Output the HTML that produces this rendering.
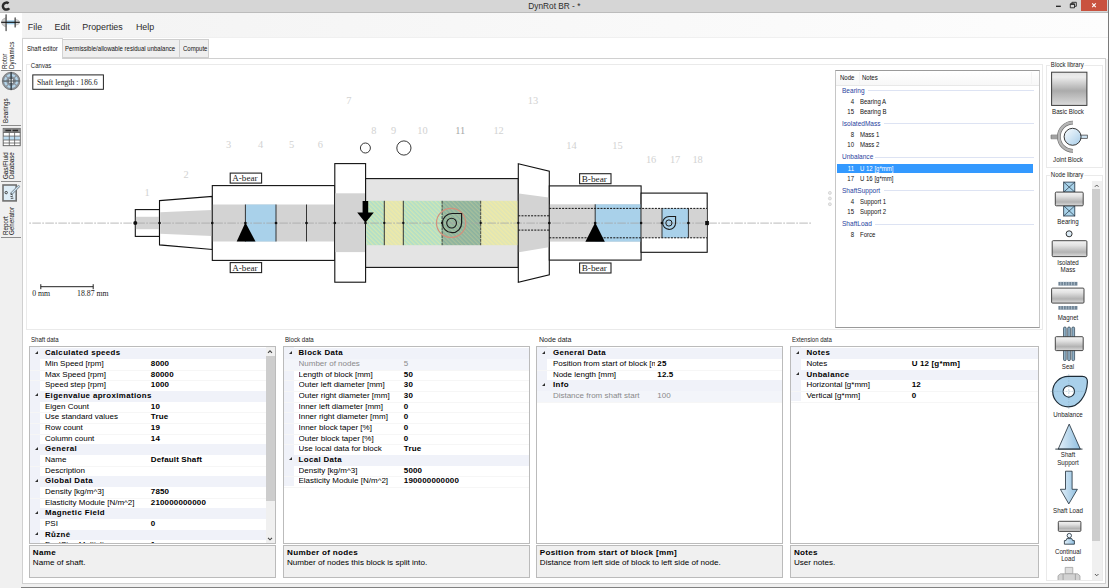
<!DOCTYPE html>
<html lang="en"><head><meta charset="utf-8"><title>DynRot BR - *</title>
<style>
html,body{margin:0;padding:0;}
body{width:1109px;height:588px;overflow:hidden;background:#f0f0f0;position:relative;font-family:"Liberation Sans",sans-serif;color:#111;}
.a{position:absolute;white-space:nowrap;}
.t{position:absolute;white-space:nowrap;line-height:1;}
.gb{position:absolute;border:1px solid #eaeaea;box-sizing:border-box;}
.gl{position:absolute;background:#fff;font-size:7px;line-height:8px;padding:0 1px;color:#222;white-space:nowrap;transform:scaleX(.86);transform-origin:0 0;}
.sx{transform:scaleX(.86);transform-origin:0 0;}
.pg{position:absolute;box-sizing:border-box;border:1px solid #bbbbbb;background:#fff;overflow:hidden;}
.row{position:absolute;left:0;right:0;height:10.65px;}
.cat{background:#f0f2f9;}
.row span{position:absolute;top:0;line-height:10.65px;font-size:8px;white-space:nowrap;color:#000;}
.row span.b{letter-spacing:0.15px;}
.b{font-weight:bold;}
.tri{position:absolute;left:5px;top:2.4px;width:0;height:0;border-left:3.4px solid transparent;border-bottom:3px solid #2e2e2e;}
.desc{position:absolute;box-sizing:border-box;border:1px solid #bbbbbb;background:#f0f0f0;}
.desc span{position:absolute;left:3px;font-size:8.1px;line-height:9px;white-space:nowrap;color:#000;}
.lv span{position:absolute;font-size:7px;line-height:9px;white-space:nowrap;transform:scaleX(.86);transform-origin:0 0;}
.lv span.n{transform-origin:100% 0;}
.lv span.g{font-size:7.2px;transform:scaleX(.91);color:#2a3f9e;}
.vt{position:absolute;white-space:nowrap;font-size:7.2px;line-height:7px;transform-origin:0 0;transform:rotate(-90deg) scaleX(.87);color:#111;}
.lib{position:absolute;font-size:7.1px;line-height:7.5px;text-align:center;width:56px;left:1040px;color:#222;transform:scaleX(.87);}
</style></head>
<body>
<div class="a" style="left:0;top:0;width:1109px;height:12.8px;background:#d6d6d6;border-bottom:0.8px solid #bcbcbc;box-sizing:border-box;"></div>
<svg class="a" style="left:0;top:0" width="12" height="12" viewBox="0 0 12 12"><path d="M8.6 3.4A3.5 3.5 0 1 0 9.2 8.2" fill="none" stroke="#2a2a2a" stroke-width="2.5"/></svg>
<div class="t" style="left:528.3px;top:2.4px;font-size:8.3px;color:#2c2c2c;">DynRot BR - *</div>
<div class="a" style="left:1081.3px;top:0;width:26px;height:10.5px;background:#c9523f;"></div>
<svg class="a" style="left:1040px;top:0" width="69" height="12" viewBox="0 0 69 12"><path d="M16 6.3h4.8" stroke="#222" stroke-width="1.3" fill="none"/><path d="M30.3 3.9h4.2v3.9h-4.2z M31.9 3.9v-1.6h4.4v4h-1.8" stroke="#222" stroke-width="0.9" fill="none"/><path d="M30.3 4.2h4.2" stroke="#222" stroke-width="1.2" fill="none"/><path d="M52.2 3.3l3.6 3.8M55.8 3.3l-3.6 3.8" stroke="#fff" stroke-width="1.1" fill="none"/></svg>
<div class="a" style="left:21px;top:12.8px;width:1087px;height:24.7px;background:linear-gradient(90deg,#f3f3f3,#fdfdfd);"></div>
<div class="a" style="left:21px;top:37.5px;width:1087px;height:21px;background:#fff;"></div>
<div class="t" style="left:27.8px;top:22.5px;font-size:8.9px;color:#2b2b2b;">File</div>
<div class="t" style="left:54.6px;top:22.5px;font-size:8.9px;color:#2b2b2b;">Edit</div>
<div class="t" style="left:82.3px;top:22.5px;font-size:8.9px;color:#2b2b2b;">Properties</div>
<div class="t" style="left:135.9px;top:22.5px;font-size:8.9px;color:#2b2b2b;">Help</div>
<div class="a" style="left:0;top:12.8px;width:21px;height:575.2px;background:#f0f0f0;"></div>
<div class="a" style="left:0;top:12.8px;width:22px;height:57.5px;background:#fff;"></div>
<div class="a" style="left:1px;top:70.0px;width:20px;height:1px;background:#8c8c8c;"></div>
<div class="a" style="left:1px;top:125.4px;width:20px;height:1px;background:#8c8c8c;"></div>
<div class="a" style="left:1px;top:180.8px;width:20px;height:1px;background:#8c8c8c;"></div>
<div class="a" style="left:1px;top:236.8px;width:20px;height:1px;background:#8c8c8c;"></div>
<div class="vt" style="left:0.9000000000000004px;top:69px;">Rotor</div>
<div class="vt" style="left:7.9px;top:69px;">Dynamics</div>
<div class="vt" style="left:1.7000000000000002px;top:123.3px;">Bearings</div>
<div class="vt" style="left:1.9000000000000004px;top:179px;">Gas/Fluid</div>
<div class="vt" style="left:8.4px;top:179px;">Database</div>
<div class="vt" style="left:1.9000000000000004px;top:234.5px;">Report</div>
<div class="vt" style="left:8.4px;top:234.5px;">Generator</div>
<svg class="a" style="left:0;top:12px" width="22" height="195" viewBox="0 12 22 195">
<!-- rotor -->
<path d="M6 17.6Q1.4 19 1.4 22.3Q1.4 25.6 6 27Z" fill="#cdcdcd" stroke="#9a9a9a" stroke-width="0.5"/>
<path d="M15.2 19.2Q19.7 20 19.7 22.3Q19.7 24.6 15.2 25.4Z" fill="#dadada" stroke="#9a9a9a" stroke-width="0.5"/>
<rect x="6.4" y="20.4" width="8.6" height="3.9" fill="#9ccbe8"/>
<rect x="5.4" y="14.2" width="1.4" height="17" rx="0.6" fill="#5a5a5a"/>
<rect x="14.5" y="17.3" width="1.3" height="10.2" rx="0.6" fill="#4a4a4a"/>
<path d="M1.2 22.3H19.7" stroke="#111" stroke-width="1.1"/>
<!-- bearings -->
<circle cx="11.1" cy="81" r="8.8" fill="#8d959d" stroke="#666" stroke-width="0.7"/>
<circle cx="11.1" cy="81" r="5.9" fill="none" stroke="#b4d6ec" stroke-width="2.2" stroke-dasharray="3.4 1.2"/>
<circle cx="11.1" cy="81" r="3.6" fill="#7d858d"/>
<rect x="9.3" y="79" width="3.6" height="4" fill="#f4f4f4"/>
<path d="M11.1 72v18" stroke="#1d2a33" stroke-width="1.1"/>
<path d="M2.4 81h17.4" stroke="#4a5258" stroke-width="0.9"/>
<!-- table -->
<rect x="3.2" y="128.4" width="17" height="17.3" fill="#fff" stroke="#5a5a5a" stroke-width="0.9"/>
<rect x="3.2" y="128.4" width="17" height="4" fill="#8a8a8a"/>
<path d="M5.4 130.5h5.6M12.6 130.5h5.4" stroke="#2a2a2a" stroke-width="1.5"/>
<rect x="3.7" y="136.2" width="16" height="3.8" fill="#bddcf0"/>
<path d="M3.2 132.5h17M3.2 136.1h17M3.2 140h17M3.2 143h17M9.3 132.4v13.3M14.6 132.4v13.3" stroke="#5a5a5a" stroke-width="0.8" fill="none"/>
<!-- report -->
<rect x="3" y="185" width="13.2" height="15.9" fill="#deedf7" stroke="#707070" stroke-width="1.6"/>
<path d="M19.4 185.6l-8.2 8.2" stroke="#6d7880" stroke-width="2.6"/>
<path d="M19.4 185.6l-7.6 7.6" stroke="#cfe5f3" stroke-width="1.3"/>
<circle cx="6.2" cy="192.6" r="1.2" fill="none" stroke="#333" stroke-width="0.9"/>
<path d="M10.2 193.8l2.6 1.4M10.4 196.4l2.4.3M10.8 198.4l2.6-.2" stroke="#444" stroke-width="0.9"/>
</svg>
<div class="a" style="left:21.6px;top:58px;width:1084.8px;height:526.4px;box-sizing:border-box;background:#fff;border:1px solid #d0d0d0;"></div>
<div class="a" style="left:62px;top:38.7px;width:118px;height:19.8px;box-sizing:border-box;background:#efefef;border:1px solid #cfcfcf;"></div>
<div class="a" style="left:179.3px;top:38.7px;width:30.2px;height:19.8px;box-sizing:border-box;background:#efefef;border:1px solid #cfcfcf;"></div>
<div class="a" style="left:22px;top:37.7px;width:40.5px;height:21.6px;box-sizing:border-box;background:#fff;border:1px solid #d2d2d2;border-bottom:none;"></div>
<div class="t sx" style="left:26.8px;top:45.4px;font-size:7px;color:#111;">Shaft editor</div>
<div class="t sx" style="left:65.2px;top:45.4px;font-size:7px;color:#111;">Permissible/allowable residual unbalance</div>
<div class="t sx" style="left:183px;top:45.4px;font-size:7px;color:#111;">Compute</div>
<div class="gb" style="left:26px;top:64.4px;width:1016.8px;height:265.3px;"></div>
<div class="gl" style="left:29.8px;top:61.5px;">Canvas</div>
<svg class="a" style="left:0;top:0" width="1109" height="588" viewBox="0 0 1109 588">
<defs>
<pattern id="hg" width="3" height="3" patternUnits="userSpaceOnUse" patternTransform="rotate(-45)"><rect width="3" height="3" fill="#aedecb"/><rect width="1.4" height="3" fill="#d2e7b2"/></pattern>
<pattern id="hy" width="3" height="3" patternUnits="userSpaceOnUse" patternTransform="rotate(-45)"><rect width="3" height="3" fill="#eeeaa8"/><rect width="1.4" height="3" fill="#dde4b8"/></pattern>
<pattern id="hd" width="3" height="3" patternUnits="userSpaceOnUse" patternTransform="rotate(-45)"><rect width="3" height="3" fill="#8ab2a0"/><rect width="1.4" height="3" fill="#a8c09c"/></pattern>
</defs>
<rect x="32.8" y="74.9" width="70.6" height="14.4" fill="#fff" stroke="#222" stroke-width="1"/>
<text x="37" y="84.6" font-family="Liberation Serif,serif" font-size="7.7" fill="#222">Shaft length : 186.6</text>
<rect x="135.3" y="209.6" width="24.2" height="26.8" fill="#fff" stroke="#111" stroke-width="1.1"/>
<rect x="135.9" y="216.8" width="23" height="12.4" fill="#d3d3d3"/>
<polygon points="159.5,200.6 212.3,196.4 212.3,249.5 159.5,244.9" fill="#fff" stroke="#111" stroke-width="1.1"/>
<polygon points="160.1,212.2 211.7,210 211.7,236 160.1,233.8" fill="#d3d3d3"/>
<rect x="212.3" y="185.6" width="122.5" height="74.8" fill="#fff" stroke="#111" stroke-width="1.1"/>
<rect x="212.9" y="204.5" width="121.3" height="37" fill="#d3d3d3"/>
<rect x="245.4" y="204.5" width="30.6" height="37" fill="#a9d1ea"/>
<rect x="334.8" y="163.6" width="30.8" height="118.6" fill="#fff" stroke="#111" stroke-width="1.1"/>
<rect x="335.4" y="193.3" width="29.6" height="58.8" fill="#d3d3d3"/>
<rect x="365.6" y="178.6" width="152.7" height="88.8" fill="#e4e4e4" stroke="#111" stroke-width="1.1"/>
<rect x="366.2" y="200.8" width="18.1" height="44.4" fill="url(#hg)"/>
<rect x="384.3" y="200.8" width="19" height="44.4" fill="url(#hy)"/>
<rect x="403.3" y="200.8" width="38.8" height="44.4" fill="url(#hg)"/>
<rect x="442.1" y="200.8" width="38.6" height="44.4" fill="url(#hd)"/>
<rect x="480.7" y="200.8" width="37" height="44.4" fill="url(#hy)"/>
<polygon points="518.3,163.7 549.3,171.1 549.3,274.8 518.3,282.4" fill="#fff" stroke="#111" stroke-width="1.1"/>
<polygon points="518.9,193.6 548.7,197.4 548.7,247.2 518.9,252.3" fill="#d3d3d3"/>
<rect x="549.3" y="185.9" width="91.8" height="74.2" fill="#fff" stroke="#111" stroke-width="1.1"/>
<rect x="549.9" y="204.3" width="90.6" height="37.3" fill="#d3d3d3"/>
<rect x="595.2" y="204.3" width="45.6" height="37.3" fill="#a9d1ea"/>
<rect x="641.1" y="193.1" width="66.1" height="59.2" fill="#fff" stroke="#111" stroke-width="1.1"/>
<rect x="641.7" y="208.4" width="64.9" height="29.4" fill="#d3d3d3"/>
<rect x="662" y="208.4" width="26.4" height="29.4" fill="#a9d1ea"/>
<path d="M518.3 215.8H549.3M518.3 230.1H549.3" stroke="#111" stroke-width="1" stroke-dasharray="2 1.2" fill="none"/>
<path d="M549.3 208.4H707M549.3 237.8H707" stroke="#111" stroke-width="1" stroke-dasharray="2 1.2" fill="none"/>
<path d="M245.4 204.5V241.5M276 204.5V241.5M306.5 204.5V241.5" stroke="#222" stroke-width="0.9" fill="none"/>
<path d="M384.3 200.8V245.2M403.3 200.8V245.2" stroke="#222" stroke-width="0.9" fill="none"/>
<path d="M442.1 200.8V245.2M480.7 200.8V245.2" stroke="#222" stroke-width="0.8" stroke-dasharray="3 0.8" fill="none"/>
<path d="M595.2 204.3V223M662 208.4V237.8M688.4 208.4V237.8" stroke="#222" stroke-width="0.9" fill="none"/>
<path d="M29.2 223.1H812.2" stroke="#a4a4a4" stroke-width="0.75" stroke-dasharray="1.8 1.3 8.6 1.3" fill="none"/>
<circle cx="135.3" cy="223" r="2" fill="#111"/>
<circle cx="159.5" cy="223" r="1.35" fill="#111"/>
<circle cx="212.3" cy="223" r="1.35" fill="#111"/>
<circle cx="245.4" cy="223" r="1.35" fill="#111"/>
<circle cx="276" cy="223" r="1.35" fill="#111"/>
<circle cx="306.5" cy="223" r="1.35" fill="#111"/>
<circle cx="334.8" cy="223" r="1.35" fill="#111"/>
<circle cx="365.5" cy="223" r="1.35" fill="#111"/>
<circle cx="384.3" cy="223" r="1.15" fill="#111"/>
<circle cx="403.3" cy="223" r="1.15" fill="#111"/>
<circle cx="442.1" cy="223" r="1.15" fill="#111"/>
<circle cx="480.7" cy="223" r="1.15" fill="#111"/>
<circle cx="518.3" cy="223" r="1.15" fill="#111"/>
<circle cx="549.3" cy="223" r="1.35" fill="#111"/>
<circle cx="595.2" cy="223" r="1.35" fill="#111"/>
<circle cx="641.1" cy="223" r="1.35" fill="#111"/>
<circle cx="662" cy="223" r="1.35" fill="#111"/>
<circle cx="688.4" cy="223" r="1.35" fill="#111"/>
<rect x="705.2" y="221" width="3.7" height="4.1" fill="#111"/>
<polygon points="245.4,222.5 236.7,241.6 255.5,241.6" fill="#000"/>
<polygon points="595.2,222.5 585.4,241.7 604.8,241.7" fill="#000"/>
<polygon points="362.6,201 368.2,201 368.2,212.4 373.8,212.4 365.4,222.8 357.2,212.4 362.6,212.4" fill="#000"/>
<circle cx="365.4" cy="148" r="5" fill="#fff" stroke="#222" stroke-width="0.9"/>
<circle cx="403.9" cy="148" r="7.1" fill="#fff" stroke="#222" stroke-width="0.9"/>
<circle cx="451.1" cy="222.9" r="14.6" fill="none" stroke="#d2907c" stroke-width="1.2"/>
<path d="M452 213.5H461.6V223A9.6 9.6 0 1 1 452 213.5Z" fill="none" stroke="#1a1a1a" stroke-width="1.2"/>
<circle cx="451.6" cy="223.1" r="4.9" fill="none" stroke="#1a1a1a" stroke-width="1.1"/>
<path d="M669.1 216.4H675.6V223A6.5 6.5 0 1 1 669.1 216.4Z" fill="none" stroke="#1a1a1a" stroke-width="1.05"/>
<circle cx="668.9" cy="223" r="3.1" fill="none" stroke="#1a1a1a" stroke-width="1"/>
<rect x="230.2" y="173.1" width="31.4" height="10" fill="#fff" stroke="#222" stroke-width="1.1"/>
<text x="232.29999999999998" y="181.1" font-family="Liberation Serif,serif" font-size="9.2" textLength="25.2" lengthAdjust="spacingAndGlyphs" fill="#222">A-bear</text>
<rect x="230.2" y="262.6" width="31.4" height="10" fill="#fff" stroke="#222" stroke-width="1.1"/>
<text x="232.29999999999998" y="270.6" font-family="Liberation Serif,serif" font-size="9.2" textLength="25.2" lengthAdjust="spacingAndGlyphs" fill="#222">A-bear</text>
<rect x="579.6" y="173.7" width="31.4" height="10" fill="#fff" stroke="#222" stroke-width="1.1"/>
<text x="581.7" y="181.7" font-family="Liberation Serif,serif" font-size="9.2" textLength="25.2" lengthAdjust="spacingAndGlyphs" fill="#222">B-bear</text>
<rect x="579.6" y="263" width="31.4" height="10" fill="#fff" stroke="#222" stroke-width="1.1"/>
<text x="581.7" y="271" font-family="Liberation Serif,serif" font-size="9.2" textLength="25.2" lengthAdjust="spacingAndGlyphs" fill="#222">B-bear</text>
<text x="147.2" y="196.3" text-anchor="middle" font-family="Liberation Serif,serif" font-size="10.4" fill="#d2d2d2">1</text>
<text x="186" y="177.8" text-anchor="middle" font-family="Liberation Serif,serif" font-size="10.4" fill="#d2d2d2">2</text>
<text x="228.7" y="148.4" text-anchor="middle" font-family="Liberation Serif,serif" font-size="10.4" fill="#d2d2d2">3</text>
<text x="260.5" y="148.4" text-anchor="middle" font-family="Liberation Serif,serif" font-size="10.4" fill="#d2d2d2">4</text>
<text x="291.5" y="148.4" text-anchor="middle" font-family="Liberation Serif,serif" font-size="10.4" fill="#d2d2d2">5</text>
<text x="320.3" y="148.4" text-anchor="middle" font-family="Liberation Serif,serif" font-size="10.4" fill="#d2d2d2">6</text>
<text x="348.8" y="103.9" text-anchor="middle" font-family="Liberation Serif,serif" font-size="10.4" fill="#d2d2d2">7</text>
<text x="373.8" y="133.8" text-anchor="middle" font-family="Liberation Serif,serif" font-size="10.4" fill="#d2d2d2">8</text>
<text x="393.5" y="133.8" text-anchor="middle" font-family="Liberation Serif,serif" font-size="10.4" fill="#d2d2d2">9</text>
<text x="422.4" y="133.8" text-anchor="middle" font-family="Liberation Serif,serif" font-size="10.4" fill="#d2d2d2">10</text>
<text x="460.2" y="133.8" text-anchor="middle" font-family="Liberation Serif,serif" font-size="10.4" fill="#a6a6a6">11</text>
<text x="498.6" y="133.8" text-anchor="middle" font-family="Liberation Serif,serif" font-size="10.4" fill="#d2d2d2">12</text>
<text x="533" y="103.9" text-anchor="middle" font-family="Liberation Serif,serif" font-size="10.4" fill="#d2d2d2">13</text>
<text x="571.4" y="148.5" text-anchor="middle" font-family="Liberation Serif,serif" font-size="10.4" fill="#d2d2d2">14</text>
<text x="617.4" y="148.5" text-anchor="middle" font-family="Liberation Serif,serif" font-size="10.4" fill="#d2d2d2">15</text>
<text x="651.1" y="162.8" text-anchor="middle" font-family="Liberation Serif,serif" font-size="10.4" fill="#d2d2d2">16</text>
<text x="675.1" y="162.8" text-anchor="middle" font-family="Liberation Serif,serif" font-size="10.4" fill="#d2d2d2">17</text>
<text x="697.6" y="162.8" text-anchor="middle" font-family="Liberation Serif,serif" font-size="10.4" fill="#d2d2d2">18</text>
<path d="M40.8 286.7H93.2M40.8 284.2V289.2M93.2 284.2V289.2" stroke="#222" stroke-width="1" fill="none"/>
<text x="32.2" y="296.4" font-family="Liberation Serif,serif" font-size="7.8" fill="#222">0 mm</text>
<text x="77" y="296.4" font-family="Liberation Serif,serif" font-size="7.8" fill="#222">18.87 mm</text>
<circle cx="829.9" cy="192.9" r="1.5" fill="#e9e9e9" stroke="#c6c6c6" stroke-width="0.6"/>
<circle cx="829.9" cy="198.5" r="1.5" fill="#e9e9e9" stroke="#c6c6c6" stroke-width="0.6"/>
<circle cx="829.9" cy="204.2" r="1.5" fill="#e9e9e9" stroke="#c6c6c6" stroke-width="0.6"/>
</svg>
<div class="a lv" style="left:834.6px;top:70px;width:205.6px;height:257.9px;box-sizing:border-box;border:1px solid #c6c6c6;border-top-color:#9a9a9a;border-bottom-color:#9a9a9a;background:#fff;">
<div class="a" style="left:0;top:0;width:203.5px;height:13.6px;background:linear-gradient(#ffffff,#f7f7f7);border-bottom:1px solid #e8e8e8;"></div>
<div class="a" style="left:23.4px;top:1px;width:1px;height:12px;background:#f3f3f3;"></div>
<div class="a" style="left:195px;top:1px;width:1px;height:12px;background:#f3f3f3;"></div>
<span style="left:4.8px;top:2px;">Node</span><span style="left:26.2px;top:2px;">Notes</span>
<span class="g" style="left:6.9px;top:14.50px;">Bearing</span>
<div class="a" style="left:32.9px;top:18.80px;width:165.6px;height:1px;background:#dde3f3;"></div>
<span class="n" style="left:2.4px;width:16px;text-align:right;top:25.60px;color:#111;">4</span><span style="left:24.3px;top:25.60px;color:#111;">Bearing A</span>
<span class="n" style="left:2.4px;width:16px;text-align:right;top:35.80px;color:#111;">15</span><span style="left:24.3px;top:35.80px;color:#111;">Bearing B</span>
<span class="g" style="left:6.9px;top:47.95px;">IsolatedMass</span>
<div class="a" style="left:48.9px;top:52.25px;width:149.6px;height:1px;background:#dde3f3;"></div>
<span class="n" style="left:2.4px;width:16px;text-align:right;top:59.05px;color:#111;">8</span><span style="left:24.3px;top:59.05px;color:#111;">Mass 1</span>
<span class="n" style="left:2.4px;width:16px;text-align:right;top:69.25px;color:#111;">10</span><span style="left:24.3px;top:69.25px;color:#111;">Mass 2</span>
<span class="g" style="left:6.9px;top:81.40px;">Unbalance</span>
<div class="a" style="left:39.9px;top:85.70px;width:158.6px;height:1px;background:#dde3f3;"></div>
<div class="a" style="left:1px;top:92.50px;width:196.5px;height:9.4px;background:#3399ff;"></div>
<span class="n" style="left:2.4px;width:16px;text-align:right;top:92.50px;color:#fff;">11</span><span style="left:24.3px;top:92.50px;color:#fff;">U 12 [g*mm]</span>
<span class="n" style="left:2.4px;width:16px;text-align:right;top:102.70px;color:#111;">17</span><span style="left:24.3px;top:102.70px;color:#111;">U 16 [g*mm]</span>
<span class="g" style="left:6.9px;top:114.85px;">ShaftSupport</span>
<div class="a" style="left:48.9px;top:119.15px;width:149.6px;height:1px;background:#dde3f3;"></div>
<span class="n" style="left:2.4px;width:16px;text-align:right;top:125.95px;color:#111;">4</span><span style="left:24.3px;top:125.95px;color:#111;">Support 1</span>
<span class="n" style="left:2.4px;width:16px;text-align:right;top:136.15px;color:#111;">15</span><span style="left:24.3px;top:136.15px;color:#111;">Support 2</span>
<span class="g" style="left:6.9px;top:148.30px;">ShaftLoad</span>
<div class="a" style="left:39.9px;top:152.60px;width:158.6px;height:1px;background:#dde3f3;"></div>
<span class="n" style="left:2.4px;width:16px;text-align:right;top:159.40px;color:#111;">8</span><span style="left:24.3px;top:159.40px;color:#111;">Force</span>
</div>
<div class="t" style="left:31.3px;top:336.6px;font-size:6.9px;color:#222;transform:scaleX(0.88);transform-origin:0 0;">Shaft data</div>
<div class="pg" style="left:28.8px;top:345.9px;width:247.3px;height:197.8px;">
<div class="a" style="left:0;top:0;width:10px;height:198.03px;background:#f0f2f9;"></div>
<div class="row cat" style="top:1.60px;"><i class="tri"></i><span class="b" style="left:15.2px;font-size:7.9px;letter-spacing:0.37px;">Calculated speeds</span></div>
<div class="row" style="top:12.25px;border-bottom:0.5px solid #f6f6f6;"><span style="left:15.2px;width:103.5px;overflow:hidden;">Min Speed [rpm]</span><span class="b" style="left:121.0px;">8000</span></div>
<div class="row" style="top:22.90px;border-bottom:0.5px solid #f6f6f6;"><span style="left:15.2px;width:103.5px;overflow:hidden;">Max Speed [rpm]</span><span class="b" style="left:121.0px;">80000</span></div>
<div class="row" style="top:33.55px;border-bottom:0.5px solid #f6f6f6;"><span style="left:15.2px;width:103.5px;overflow:hidden;">Speed step [rpm]</span><span class="b" style="left:121.0px;">1000</span></div>
<div class="row cat" style="top:44.20px;"><i class="tri"></i><span class="b" style="left:15.2px;font-size:7.9px;letter-spacing:0.37px;">Eigenvalue aproximations</span></div>
<div class="row" style="top:54.85px;border-bottom:0.5px solid #f6f6f6;"><span style="left:15.2px;width:103.5px;overflow:hidden;">Eigen Count</span><span class="b" style="left:121.0px;">10</span></div>
<div class="row" style="top:65.50px;border-bottom:0.5px solid #f6f6f6;"><span style="left:15.2px;width:103.5px;overflow:hidden;">Use standard values</span><span class="b" style="left:121.0px;">True</span></div>
<div class="row" style="top:76.15px;border-bottom:0.5px solid #f6f6f6;"><span style="left:15.2px;width:103.5px;overflow:hidden;">Row count</span><span class="b" style="left:121.0px;">19</span></div>
<div class="row" style="top:86.80px;border-bottom:0.5px solid #f6f6f6;"><span style="left:15.2px;width:103.5px;overflow:hidden;">Column count</span><span class="b" style="left:121.0px;">14</span></div>
<div class="row cat" style="top:97.45px;"><i class="tri"></i><span class="b" style="left:15.2px;font-size:7.9px;letter-spacing:0.37px;">General</span></div>
<div class="row" style="top:108.10px;border-bottom:0.5px solid #f6f6f6;"><span style="left:15.2px;width:103.5px;overflow:hidden;">Name</span><span class="b" style="left:121.0px;">Default Shaft</span></div>
<div class="row" style="top:118.75px;border-bottom:0.5px solid #f6f6f6;"><span style="left:15.2px;width:103.5px;overflow:hidden;">Description</span><span class="b" style="left:121.0px;"></span></div>
<div class="row cat" style="top:129.40px;"><i class="tri"></i><span class="b" style="left:15.2px;font-size:7.9px;letter-spacing:0.37px;">Global Data</span></div>
<div class="row" style="top:140.05px;border-bottom:0.5px solid #f6f6f6;"><span style="left:15.2px;width:103.5px;overflow:hidden;">Density [kg/m^3]</span><span class="b" style="left:121.0px;">7850</span></div>
<div class="row" style="top:150.70px;border-bottom:0.5px solid #f6f6f6;"><span style="left:15.2px;width:103.5px;overflow:hidden;">Elasticity Module [N/m^2]</span><span class="b" style="left:121.0px;">210000000000</span></div>
<div class="row cat" style="top:161.35px;"><i class="tri"></i><span class="b" style="left:15.2px;font-size:7.9px;letter-spacing:0.37px;">Magnetic Field</span></div>
<div class="row" style="top:172.00px;border-bottom:0.5px solid #f6f6f6;"><span style="left:15.2px;width:103.5px;overflow:hidden;">PSI</span><span class="b" style="left:121.0px;">0</span></div>
<div class="row cat" style="top:182.65px;"><i class="tri"></i><span class="b" style="left:15.2px;font-size:7.9px;letter-spacing:0.37px;">R&#367;zn&#233;</span></div>
<div class="row" style="top:193.30px;border-bottom:0.5px solid #f6f6f6;"><span style="left:15.2px;width:103.5px;overflow:hidden;">FontSize Multiplier</span><span class="b" style="left:121.0px;">1</span></div>
<div class="a" style="right:0;top:0;width:9.2px;height:196px;background:#f0f0f0;"></div>
<div class="a" style="right:0;top:9.4px;width:9.2px;height:145px;background:#cdcdcd;"></div>
<svg class="a" style="right:-0.2px;top:0" width="10" height="196" viewBox="0 0 10 196"><path d="M3 5.8L5 3.8L7 5.8M3 190.8L5 192.8L7 190.8" stroke="#444" stroke-width="1.1" fill="none"/></svg>
</div>
<div class="desc" style="left:28.8px;top:544.9px;width:247.3px;height:33.5px;"><span class="b" style="top:2.5px;letter-spacing:0.3px;">Name</span><span style="top:12.1px;">Name of shaft.</span></div>
<div class="t" style="left:284.9px;top:336.6px;font-size:6.9px;color:#222;transform:scaleX(0.894);transform-origin:0 0;">Block data</div>
<div class="pg" style="left:283.0px;top:345.9px;width:246.9px;height:197.8px;">
<div class="a" style="left:0;top:0;width:10px;height:139.45px;background:#f0f2f9;"></div>
<div class="row cat" style="top:1.60px;"><i class="tri"></i><span class="b" style="left:14.5px;font-size:7.9px;letter-spacing:0.37px;">Block Data</span></div>
<div class="row" style="top:12.25px;border-bottom:0.5px solid #f6f6f6;background:#f3f5fa;"><span style="color:#8a8a8a;left:14.5px;width:103.0px;overflow:hidden;">Number of nodes</span><span style="color:#8a8a8a;left:119.8px;">5</span></div>
<div class="row" style="top:22.90px;border-bottom:0.5px solid #f6f6f6;"><span style="left:14.5px;width:103.0px;overflow:hidden;">Length of block [mm]</span><span class="b" style="left:119.8px;">50</span></div>
<div class="row" style="top:33.55px;border-bottom:0.5px solid #f6f6f6;"><span style="left:14.5px;width:103.0px;overflow:hidden;">Outer left diameter [mm]</span><span class="b" style="left:119.8px;">30</span></div>
<div class="row" style="top:44.20px;border-bottom:0.5px solid #f6f6f6;"><span style="left:14.5px;width:103.0px;overflow:hidden;">Outer right diameter [mm]</span><span class="b" style="left:119.8px;">30</span></div>
<div class="row" style="top:54.85px;border-bottom:0.5px solid #f6f6f6;"><span style="left:14.5px;width:103.0px;overflow:hidden;">Inner left diameter [mm]</span><span class="b" style="left:119.8px;">0</span></div>
<div class="row" style="top:65.50px;border-bottom:0.5px solid #f6f6f6;"><span style="left:14.5px;width:103.0px;overflow:hidden;">Inner right diameter [mm]</span><span class="b" style="left:119.8px;">0</span></div>
<div class="row" style="top:76.15px;border-bottom:0.5px solid #f6f6f6;"><span style="left:14.5px;width:103.0px;overflow:hidden;">Inner block taper [%]</span><span class="b" style="left:119.8px;">0</span></div>
<div class="row" style="top:86.80px;border-bottom:0.5px solid #f6f6f6;"><span style="left:14.5px;width:103.0px;overflow:hidden;">Outer block taper [%]</span><span class="b" style="left:119.8px;">0</span></div>
<div class="row" style="top:97.45px;border-bottom:0.5px solid #f6f6f6;"><span style="left:14.5px;width:103.0px;overflow:hidden;">Use local data for block</span><span class="b" style="left:119.8px;">True</span></div>
<div class="row cat" style="top:108.10px;"><i class="tri"></i><span class="b" style="left:14.5px;font-size:7.9px;letter-spacing:0.37px;">Local Data</span></div>
<div class="row" style="top:118.75px;border-bottom:0.5px solid #f6f6f6;"><span style="left:14.5px;width:103.0px;overflow:hidden;">Density [kg/m^3]</span><span class="b" style="left:119.8px;">5000</span></div>
<div class="row" style="top:129.40px;border-bottom:0.5px solid #f6f6f6;"><span style="left:14.5px;width:103.0px;overflow:hidden;">Elasticity Module [N/m^2]</span><span class="b" style="left:119.8px;">190000000000</span></div>
</div>
<div class="desc" style="left:283.0px;top:544.9px;width:246.9px;height:33.5px;"><span class="b" style="top:2.5px;letter-spacing:0.3px;">Number of nodes</span><span style="top:12.1px;">Number of nodes this block is split into.</span></div>
<div class="t" style="left:538.5px;top:336.6px;font-size:6.9px;color:#222;transform:scaleX(1.02);transform-origin:0 0;">Node data</div>
<div class="pg" style="left:535.8px;top:345.9px;width:247.7px;height:197.8px;">
<div class="a" style="left:0;top:0;width:10px;height:54.25px;background:#f0f2f9;"></div>
<div class="row cat" style="top:1.60px;"><i class="tri"></i><span class="b" style="left:16.1px;font-size:7.9px;letter-spacing:0.37px;">General Data</span></div>
<div class="row" style="top:12.25px;border-bottom:0.5px solid #f6f6f6;"><span style="left:16.1px;width:102.1px;overflow:hidden;">Position from start of block [mm]</span><span class="b" style="left:120.5px;">25</span></div>
<div class="row" style="top:22.90px;border-bottom:0.5px solid #f6f6f6;"><span style="left:16.1px;width:102.1px;overflow:hidden;">Node length [mm]</span><span class="b" style="left:120.5px;">12.5</span></div>
<div class="row cat" style="top:33.55px;"><i class="tri"></i><span class="b" style="left:16.1px;font-size:7.9px;letter-spacing:0.37px;">Info</span></div>
<div class="row" style="top:44.20px;border-bottom:0.5px solid #f6f6f6;background:#f3f5fa;"><span style="color:#8a8a8a;left:16.1px;width:102.1px;overflow:hidden;">Distance from shaft start</span><span style="color:#8a8a8a;left:120.5px;">100</span></div>
</div>
<div class="desc" style="left:535.8px;top:544.9px;width:247.7px;height:33.5px;"><span class="b" style="top:2.5px;letter-spacing:0.3px;">Position from start of block [mm]</span><span style="top:12.1px;">Distance from left side of block to left side of node.</span></div>
<div class="t" style="left:791.9px;top:336.6px;font-size:6.9px;color:#222;transform:scaleX(0.875);transform-origin:0 0;">Extension data</div>
<div class="pg" style="left:789.9px;top:345.9px;width:248.7px;height:197.8px;">
<div class="a" style="left:0;top:0;width:10px;height:54.25px;background:#f0f2f9;"></div>
<div class="row cat" style="top:1.60px;"><i class="tri"></i><span class="b" style="left:15.5px;font-size:7.9px;letter-spacing:0.37px;">Notes</span></div>
<div class="row" style="top:12.25px;border-bottom:0.5px solid #f6f6f6;"><span style="left:15.5px;width:103.0px;overflow:hidden;">Notes</span><span class="b" style="left:120.8px;">U 12 [g*mm]</span></div>
<div class="row cat" style="top:22.90px;"><i class="tri"></i><span class="b" style="left:15.5px;font-size:7.9px;letter-spacing:0.37px;">Unbalance</span></div>
<div class="row" style="top:33.55px;border-bottom:0.5px solid #f6f6f6;"><span style="left:15.5px;width:103.0px;overflow:hidden;">Horizontal [g*mm]</span><span class="b" style="left:120.8px;">12</span></div>
<div class="row" style="top:44.20px;border-bottom:0.5px solid #f6f6f6;"><span style="left:15.5px;width:103.0px;overflow:hidden;">Vertical [g*mm]</span><span class="b" style="left:120.8px;">0</span></div>
</div>
<div class="desc" style="left:789.9px;top:544.9px;width:248.7px;height:33.5px;"><span class="b" style="top:2.5px;letter-spacing:0.3px;">Notes</span><span style="top:12.1px;">User notes.</span></div>
<div class="gb" style="left:1046px;top:65px;width:57.4px;height:103px;"></div>
<div class="gl" style="left:1049.6px;top:61px;">Block library</div>
<div class="gb" style="left:1046px;top:175.4px;width:57.4px;height:406px;"></div>
<div class="gl" style="left:1049.6px;top:171.2px;">Node library</div>
<div class="a" style="left:1091.8px;top:181px;width:9.8px;height:399px;background:#f0f0f0;"></div>
<div class="a" style="left:1091.6px;top:189.4px;width:8.8px;height:351.4px;background:#cdcdcd;"></div>
<svg class="a" style="left:1091.6px;top:181px" width="9.4" height="399" viewBox="0 0 9.4 399"><path d="M2.9 5.6L4.7 3.8L6.5 5.6M2.9 393.2L4.7 395L6.5 393.2" stroke="#444" stroke-width="0.9" fill="none"/></svg>
<svg class="a" style="left:1040px;top:60px" width="56" height="521" viewBox="1040 60 56 521">
<defs>
<linearGradient id="gm" x1="0" y1="0" x2="0" y2="1"><stop offset="0" stop-color="#e4e4e4"/><stop offset="0.15" stop-color="#ececec"/><stop offset="0.56" stop-color="#ababab"/><stop offset="1" stop-color="#dbdbdb"/></linearGradient>
<linearGradient id="gc" x1="0" y1="0" x2="0" y2="1"><stop offset="0" stop-color="#f4f4f4"/><stop offset="0.3" stop-color="#e2e2e2"/><stop offset="0.72" stop-color="#b2b2b2"/><stop offset="1" stop-color="#dcdcdc"/></linearGradient>
<linearGradient id="gbl" x1="0" y1="0" x2="1" y2="1"><stop offset="0" stop-color="#fafdff"/><stop offset="1" stop-color="#a6cce8"/></linearGradient>
<linearGradient id="gbv" x1="0" y1="0" x2="1" y2="0"><stop offset="0" stop-color="#e4f0f9"/><stop offset="1" stop-color="#8fbfe0"/></linearGradient>
</defs>
<rect x="1051.6" y="72.2" width="35.3" height="33.2" fill="url(#gm)" stroke="#3c3c3c" stroke-width="1"/>
<path d="M1051 136.9H1058.5" stroke="#a2a2a2" stroke-width="3.4"/>
<path d="M1058 135H1051V138.8H1058" stroke="#666" stroke-width="0.6" fill="none"/>
<path d="M1073 122.6A14.1 14.1 0 0 0 1073 150.8" fill="none" stroke="#707070" stroke-width="3.7"/>
<path d="M1073 122.6A14.1 14.1 0 0 0 1073 150.8" fill="none" stroke="#b6b6b6" stroke-width="2.5"/>
<rect x="1080.5" y="135.1" width="6.8" height="3.2" fill="#cfe4f3" stroke="#333" stroke-width="0.7"/>
<circle cx="1072.6" cy="136.8" r="8.5" fill="url(#gbl)" stroke="#222" stroke-width="0.9"/>
<rect x="1063.7" y="182.1" width="11.1" height="10" fill="#a9d3ea" stroke="#234" stroke-width="0.8"/>
<path d="M1063.7 182.1L1074.8 192.1M1074.8 182.1L1063.7 192.1" stroke="#234" stroke-width="0.7"/>
<rect x="1063.7" y="205.8" width="11.1" height="10.2" fill="#a9d3ea" stroke="#234" stroke-width="0.8"/>
<path d="M1063.7 205.8L1074.8 216.0M1074.8 205.8L1063.7 216.0" stroke="#234" stroke-width="0.7"/>
<rect x="1055.3" y="192.1" width="27.9" height="13.7" rx="1" fill="url(#gc)" stroke="#333" stroke-width="0.9"/>
<circle cx="1069.1" cy="233.8" r="3" fill="#dcecf7" stroke="#333" stroke-width="1"/>
<rect x="1052.2" y="240.7" width="34.7" height="15.9" rx="1" fill="url(#gc)" stroke="#333" stroke-width="0.9"/>
<rect x="1058.4" y="281.9" width="19" height="3.7" fill="#6f8496"/>
<path d="M1060.8 281.9v3.7M1063.5 281.9v3.7M1066.2 281.9v3.7M1068.9 281.9v3.7M1071.6 281.9v3.7M1074.3 281.9v3.7" stroke="#c9d6e0" stroke-width="0.7"/>
<rect x="1058.4" y="306" width="19" height="3.7" fill="#6f8496"/>
<path d="M1060.8 306v3.7M1063.5 306v3.7M1066.2 306v3.7M1068.9 306v3.7M1071.6 306v3.7M1074.3 306v3.7" stroke="#c9d6e0" stroke-width="0.7"/>
<rect x="1051.6" y="288.1" width="32.4" height="15" rx="1" fill="url(#gc)" stroke="#333" stroke-width="0.9"/>
<rect x="1063.5" y="327" width="2.7" height="33.6" rx="1.2" fill="#8fb0c6" stroke="#2c3e4c" stroke-width="0.7"/>
<rect x="1067.7" y="327" width="2.7" height="33.6" rx="1.2" fill="#8fb0c6" stroke="#2c3e4c" stroke-width="0.7"/>
<rect x="1071.9" y="327" width="2.7" height="33.6" rx="1.2" fill="#8fb0c6" stroke="#2c3e4c" stroke-width="0.7"/>
<rect x="1055.3" y="336.7" width="27.9" height="13.9" rx="1" fill="url(#gc)" stroke="#333" stroke-width="0.9"/>
<path d="M1068.3 376.4H1082.3Q1087.6 376.4 1087.4 382Q1087 392.5 1081.3 399.8Q1076 406.8 1068.3 406.8A15.6 15.2 0 0 1 1068.3 376.4Z" fill="#a9d0ea" stroke="#1d2b36" stroke-width="1.15"/>
<circle cx="1068.8" cy="391.4" r="5.7" fill="#fff" stroke="#1d2b36" stroke-width="1.1"/>
<path d="M1050.5 391.4H1087M1068.8 374V409" stroke="#8fb2c8" stroke-width="0.5" stroke-dasharray="2 1"/>
<polygon points="1069.2,424.1 1058.2,449.1 1080.3,449.1" fill="url(#gbv)" stroke="#1d2b36" stroke-width="0.8"/>
<path d="M1055.3 449.1H1082.5" stroke="#1d2b36" stroke-width="0.9"/>
<polygon points="1065.5,471.2 1072.1,471.2 1072.1,489.3 1077.4,489.3 1068.8,503.9 1060.4,489.3 1065.5,489.3" fill="url(#gbv)" stroke="#1d2b36" stroke-width="0.8"/>
<rect x="1058.3" y="521.3" width="22.6" height="10.1" rx="1" fill="url(#gc)" stroke="#333" stroke-width="0.9"/>
<path d="M1066.8 538.6H1071.8L1072.7 540.6H1074.4V544.2H1064.4V540.6H1066Z" fill="url(#gbv)" stroke="#1d2b36" stroke-width="0.8"/>
<circle cx="1069.3" cy="535.6" r="2.2" fill="#eaf4fb" stroke="#1d2b36" stroke-width="0.8"/>
<path d="M1065.2 567.4h7.6v6.4h-7.6z" fill="#dedede" stroke="#9a9a9a" stroke-width="0.7"/>
<path d="M1058 580v-4.2l2.4-2h17.2l2.4 2V580" fill="#d2d2d2" stroke="#9a9a9a" stroke-width="0.7"/>
<path d="M1063.1 573.8V580M1075.4 573.8V580" stroke="#9a9a9a" stroke-width="0.8"/>
</svg>
<div class="lib" style="top:108.6px;">Basic Block</div>
<div class="lib" style="top:156.6px;">Joint Block</div>
<div class="lib" style="top:219.2px;">Bearing</div>
<div class="lib" style="top:259.6px;">Isolated<br>Mass</div>
<div class="lib" style="top:314.8px;">Magnet</div>
<div class="lib" style="top:364.4px;">Seal</div>
<div class="lib" style="top:411.5px;">Unbalance</div>
<div class="lib" style="top:452.2px;">Shaft<br>Support</div>
<div class="lib" style="top:507.6px;">Shaft Load</div>
<div class="lib" style="top:548.8px;">Continual<br>Load</div>
<div class="a" style="left:1108px;top:0;width:1px;height:588px;background:#7a7a7a;"></div>
<div class="a" style="left:21px;top:586.5px;width:1088px;height:1.5px;background:#808080;"></div>
</body></html>
